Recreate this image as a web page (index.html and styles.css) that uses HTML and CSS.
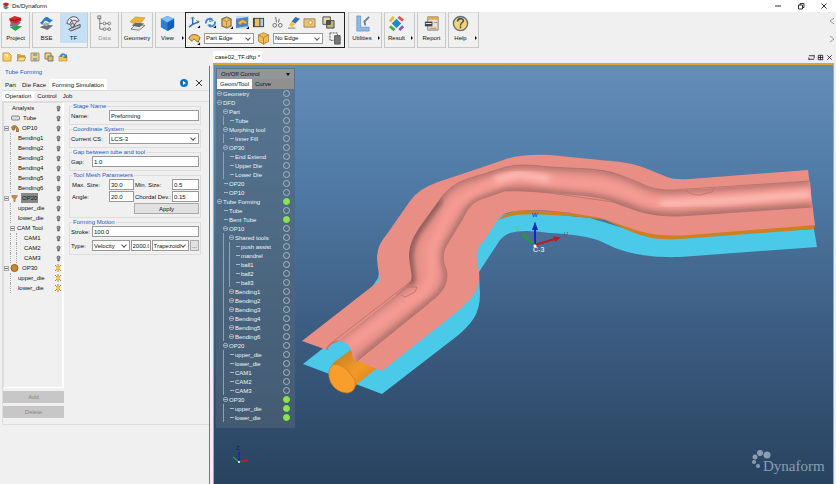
FILE: index.html
```html
<!DOCTYPE html>
<html lang="en">
<head>
<meta charset="utf-8">
<title>Ds/Dynaform</title>
<link rel="stylesheet" href="styles.css">
</head>
<body>
<svg class="defs" aria-hidden="true">
  <symbol id="layers" viewBox="0 0 18 18"><path d="M3 13l7-2 6 1-7 5z" fill="#2ca34a"/><path d="M4 8l6-2 5 2-6 5-6-1z" fill="#737b80"/><path d="M2 4l6-3 7 2v3l-5 3-6-1z" fill="#d52a2c"/><path d="M3 5l5 1 6-2" fill="none" stroke="#8f1418"/></symbol>
  <symbol id="cube" viewBox="0 0 18 18"><path d="M9 1l7 3v9l-7 4-7-4V4z" fill="#2f7fd0"/><path d="M9 1l7 3-7 4-7-4z" fill="#7cc0f4"/><path d="M9 8l7-4v9l-7 4z" fill="#1c5fae"/></symbol>
  <symbol id="box" viewBox="0 0 18 18"><path d="M9 1l7 3v9l-7 4-7-4V4z" fill="#f3bd55" stroke="#9b7428"/><path d="M2 4l7 4 7-4M9 8v9" fill="none" stroke="#9b7428"/></symbol>
</svg>

<header class="titlebar">
  <svg class="app-icon"><use href="#layers"/></svg>
  <h1>Ds/Dynaform</h1>
  <div class="window-buttons">
    <button aria-label="Minimize"><svg viewBox="0 0 8 8"><path d="M1 4h6"/></svg></button>
    <button aria-label="Restore"><svg viewBox="0 0 8 8"><path d="M1.500 3h4v4h-4zM3 3V1.500h4v4H5.500"/></svg></button>
    <button aria-label="Close window"><svg viewBox="0 0 8 8"><path d="M1.500 1.500l5 5m0-5l-5 5"/></svg></button>
  </div>
</header>

<nav class="toolbar" aria-label="Main">
  <div class="group"><button class="tool"><svg><use href="#layers"/></svg>Project</button></div>
  <div class="group">
    <button class="tool"><svg viewBox="0 0 18 18"><path d="M2 13l6-3 8 1-6 5z" fill="#6b7176"/><path d="M4 10l4-2 5 1-4 3z" fill="#a9b0b5"/><path d="M2 8c3-1 4-6 7-6s3 3 7 3l-3 3c-3 0-3-2-5-2s-2 4-4 4z" fill="#2c79d0"/></svg>BSE</button>
    <button class="tool active"><svg viewBox="0 0 18 18" fill="none" stroke="#4a4f55"><path d="M2 9C3 3 8 0 13 3l2 3-2 1C9 4 6 6 5 10z" fill="#eceff2"/><path d="M4 15l12-5v3L6 17z" fill="#c9ced3"/><path d="M6 4l2 4M9 12l4-6" stroke="#d3312f"/><circle cx="8" cy="11" r="2"/></svg>TF</button>
  </div>
  <div class="group"><button class="tool" disabled><svg viewBox="0 0 18 18" fill="none" stroke="#777"><path d="M4 3v12h4M4 9h3m3 0h3M11 15h2"/><rect x="2" y="1" width="3" height="3"/><circle cx="9" cy="9" r="1.500"/><circle cx="9" cy="15" r="1.500"/><circle cx="14" cy="9" r="1.500"/><circle cx="14" cy="15" r="1.500"/></svg>Data</button></div>
  <div class="group"><button class="tool wide"><svg viewBox="0 0 18 18"><path d="M2 15l5-5 10 1-6 5z" fill="#e6e8e8" stroke="#747a7c"/><path d="M3 11l4-3 9 1-5 4z" fill="#62696d"/><path d="M1 7l6-5 10 1-4 5-5-1-3 2z" fill="#eeb52e" stroke="#b3811a" stroke-width=".5"/></svg>Geometry</button></div>
  <div class="group view"><button class="tool arrow"><svg><use href="#cube"/></svg>View</button></div>

  <div class="quick" role="group" aria-label="Display">
    <div class="quick-row">
      <button aria-label="Orientation"><svg viewBox="0 0 14 14" fill="none"><path d="M5 9V2M5 9l7-3M5 9l-4 3" stroke="#2a6cb8" stroke-width="1.500"/><path d="M3 3l2-2 2 2M9 5l3 1-2 2" stroke="#3b9252"/><path d="M10 13h3v-3z" fill="#111"/></svg></button>
      <button aria-label="Rotate"><svg viewBox="0 0 14 14" fill="none" stroke="#3f8bd0" stroke-width="2"><path d="M2 8c0-5 4-6 7-4M12 6c0 5-4 6-7 4"/><path d="M7 2l3 3-4 1zM7 9l-3 1 3 2z" stroke-width="1"/><path d="M10 13h3v-3z" fill="#111" stroke="none"/></svg></button>
      <button aria-label="Box view"><svg viewBox="0 0 14 14"><path d="M7 1l5 2v8l-5 2-5-2V3z" fill="#8299ae" stroke="#7e642e"/><path d="M3 4l4-2 4 2v6l-4 2-4-2z" fill="#f3bd55"/><path d="M3 4l4 2 4-2M7 6v6" fill="none" stroke="#9b7428" stroke-width=".7"/><path d="M11 14h3v-3z" fill="#111"/></svg></button>
      <button class="active" aria-label="Shaded"><svg viewBox="0 0 14 14"><path d="M0 3l13-2v10L0 13z" fill="#4a87c7"/><path d="M2 8c2-5 7-5 10-1l-2 2c-2-2-4-2-5 1z" fill="#f3b23b" stroke="#8b6526" stroke-width=".5"/><path d="M11 14h3v-3z" fill="#111"/></svg></button>
      <button aria-label="Section"><svg viewBox="0 0 14 14"><path d="M1 2h12v10H1z" fill="#45433f"/><path d="M3 3h5v8H3z" fill="#f1bd59"/><path d="M9 3h3v8H9z" fill="#a9caee"/></svg></button>
      <button class="gap" aria-label="Hide"><svg viewBox="0 0 14 14" fill="none" stroke="#666"><path d="M5 1l1 6m3-4L8 7"/><circle cx="4" cy="10" r="2"/><circle cx="10" cy="10" r="2"/></svg></button>
      <button aria-label="Clear"><svg viewBox="0 0 14 14"><path d="M9 1l5 2-5 5-4-2z" fill="#336eb5"/><path d="M5 6l4 2-3 4-4-2z" fill="#f1c34b"/><path d="M1 13h8" stroke="#777"/></svg></button>
      <button aria-label="Capture"><svg viewBox="0 0 14 14"><path d="M1 3h12v9H1z" fill="#edc46e" stroke="#756443" stroke-width=".7"/><circle cx="8" cy="7" r="2" fill="#fff" stroke="#b59352"/></svg></button>
      <button class="gap" aria-label="Select overlap"><svg viewBox="0 0 14 14" stroke="#444"><path d="M1 1h8v8H1z" fill="#e6dfa5"/><path d="M5 5h8v8H5z" fill="#b8b777"/><path d="M5 5h4v4H5z" fill="#555"/></svg></button>
    </div>
    <div class="quick-row">
      <button aria-label="Part display"><svg viewBox="0 0 14 14"><path d="M1 7c1-5 8-6 12-1l-2 5-3-2c-1-2-3-1-4 1z" fill="#f2b94e" stroke="#80602b"/><path d="M10 14h3v-3z" fill="#111"/></svg></button>
      <span class="pick"><select aria-label="Part edge"><option>Part Edge</option></select></span>
      <button aria-label="Edge display"><svg><use href="#box"/></svg></button>
      <span class="pick"><select aria-label="Edge mode"><option>No Edge</option></select></span>
      <button class="gap" aria-label="Select inverse"><svg viewBox="0 0 14 14" fill="none" stroke="#555"><path d="M1 1h8v8H1z" stroke-dasharray="2 1"/><path d="M6 4h6v9H6z" fill="#777"/></svg></button>
    </div>
  </div>

  <div class="group"><button class="tool wide arrow"><svg viewBox="0 0 18 18"><path d="M3 1h4v12h9v4H3z" fill="#8fb9e3" stroke="#5a8cbf" stroke-width=".7"/><path d="M16 2l-5 5 1 4" fill="none" stroke="#68829c" stroke-width="2"/></svg>Utilities</button></div>
  <div class="group"><button class="tool arrow"><svg viewBox="0 0 18 18"><path d="M9 4l5 5-5 5-5-5z" fill="#218ac2"/><g fill="none" stroke-width="3"><path d="M2 7l4-5" stroke="#eeb83a"/><path d="M11 2l5 4" stroke="#df5550"/><path d="M16 12l-4 4" stroke="#8b57a4"/><path d="M2 12l5 4" stroke="#50a551"/></g></svg>Result</button></div>
  <div class="group"><button class="tool"><svg viewBox="0 0 18 18"><path d="M5 2h11v14H5z" fill="#e5e2d8" stroke="#807c74"/><path d="M5 2h11v3H5z" fill="#e4a94a"/><path d="M2 7h8v5H2z" fill="#444"/><path d="M3 9h6M7 14h7M12 8h3" stroke="#eee"/><path d="M7 14h7M12 8h3" stroke="#c4714c"/></svg>Report</button></div>
  <div class="group"><button class="tool arrow"><svg viewBox="0 0 18 18"><circle cx="9" cy="9" r="7.500" fill="#f3d477" stroke="#666f7b" stroke-width="1.500"/><path d="M6 7c0-4 6-4 6-1 0 2-3 2-3 5m0 1v2" fill="none" stroke="#455266" stroke-width="1.700"/></svg>Help</button></div>
  <div class="scroll-buttons">
    <button aria-label="Scroll left"><svg viewBox="0 0 8 8"><path d="M6 1L2 4l4 3"/></svg></button>
    <button aria-label="Scroll right"><svg viewBox="0 0 8 8"><path d="M2 1l4 3-4 3"/></svg></button>
  </div>
</nav>

<main class="workspace">
  <aside class="side">
    <div class="files">
      <button aria-label="New"><svg viewBox="0 0 10 10"><path d="M1 1h6l2 2v6H1z" fill="#f8cf6b" stroke="#c99a37"/><path d="M2 2h4v4z" fill="#fff1c2"/></svg></button>
      <button aria-label="Open"><svg viewBox="0 0 10 10"><path d="M1 9V2h3l1 1h4v6z" fill="#d8a23b"/><path d="M1 9l2-4h7L8 9z" fill="#f7d788" stroke="#9a7435" stroke-width=".6"/></svg></button>
      <button aria-label="Save"><svg viewBox="0 0 10 10"><path d="M1 1h8v8H1z" fill="#e9cf88" stroke="#a8976a"/><path d="M3 1h4v3H3zM3 6h4v3H3z" fill="#87a5bd"/></svg></button>
      <button aria-label="Save as"><svg viewBox="0 0 10 10"><path d="M1 1h6v6H1z" fill="#efcf7c" stroke="#8e7d56"/><path d="M4 4h5v5H4z" fill="#e3b853" stroke="#5e7e9a"/></svg></button>
      <button aria-label="Import"><svg viewBox="0 0 10 10"><path d="M1 4h8v5H1z" fill="#efc75c" stroke="#a68542" stroke-width=".6"/><path d="M2 5c0-5 5-4 6-2l1-1v4H5l2-2C5 2 4 3 4 5z" fill="#3b86c9"/></svg></button>
    </div>
    <section class="task">
      <div class="task-head">
        <h2>Tube Forming</h2>
        <div class="tabs" role="tablist">
          <button role="tab">Part</button><button role="tab">Die Face</button><button role="tab" aria-selected="true">Forming Simulation</button>
          <span class="task-actions">
            <button aria-label="Run"><svg viewBox="0 0 8 8"><circle cx="4" cy="4" r="4" fill="#1472bd"/><path d="M3 2l3 2-3 2z" fill="#fff"/></svg></button>
            <button aria-label="Close panel"><svg viewBox="0 0 8 8"><path d="M1 1l6 6m0-6L1 7" stroke="#333" fill="none"/></svg></button>
          </span>
        </div>
      </div>
      <div class="tabs sub" role="tablist">
        <button role="tab" aria-selected="true">Operation</button><button role="tab">Control</button><button role="tab">Job</button>
      </div>
      <div class="task-body">
        <div class="stages">
          <ul class="stage-tree" id="stages"></ul>
          <button class="plain" disabled>Add</button>
          <button class="plain" disabled>Delete</button>
        </div>
        <form class="form">
          <fieldset>
            <legend>Stage Name</legend>
            <div class="row"><label class="cap" for="name">Name:</label><input id="name" value="Preforming"></div>
          </fieldset>
          <fieldset>
            <legend>Coordinate System</legend>
            <div class="row"><label class="cap" for="cs">Current CS:</label><span class="pick"><select id="cs"><option>LCS-3</option></select></span></div>
          </fieldset>
          <fieldset>
            <legend>Gap between tube and tool</legend>
            <div class="row"><label class="short" for="gap">Gap:</label><input id="gap" value="1.0"></div>
          </fieldset>
          <fieldset class="mesh">
            <legend>Tool Mesh Parameters</legend>
            <div class="mesh-grid">
              <label for="max">Max. Size:</label><input id="max" value="30.0"><label for="min">Min. Size:</label><input id="min" value="0.5">
              <label for="angle">Angle:</label><input id="angle" value="20.0"><label for="dev">Chordal Dev.:</label><input id="dev" value="0.15">
              <button type="button" class="apply">Apply</button>
            </div>
          </fieldset>
          <fieldset class="motion">
            <legend>Forming Motion</legend>
            <div class="row"><label class="short" for="stroke">Stroke:</label><input id="stroke" value="100.0"></div>
            <div class="row type"><label class="short" for="type">Type:</label><span class="pick"><select id="type"><option>Velocity</option></select></span><input class="speed" aria-label="Speed" value="2000.0"><span class="pick"><select aria-label="Profile"><option>Trapezoidal</option></select></span><button type="button" class="more" aria-label="More">...</button></div>
          </fieldset>
        </form>
      </div>
    </section>
  </aside>

  <section class="document">
    <div class="doc-tabs">
      <button class="doc-tab">case02_TF.dftp *</button>
      <div class="doc-actions">
        <button aria-label="Swap"><svg viewBox="0 0 8 8"><path d="M1 2h6V1M7 6H1v1M7 2v3M1 6V4"/></svg></button>
        <button aria-label="Tile"><svg viewBox="0 0 8 8"><path d="M1.500 1.500h5v5h-5zM4 1.500v5M1.500 4h5"/></svg></button>
        <button aria-label="Close document"><svg viewBox="0 0 8 8"><path d="M1.500 1.500l5 5m0-5l-5 5"/></svg></button>
      </div>
    </div>
    <div class="viewport">
      <svg class="scene" viewBox="214 64 619 420" preserveAspectRatio="xMinYMin slice" role="img" aria-label="Formed tube between dies">
        <defs>
          <path id="tube" d="M328 348C330 341 337 340 341 338L395 295 410 281C414 276 409 266 409 253C410 242 414 235 419 227L440 198Q450 184 467 178L506 166Q520 162 550 166L590 168C605 169 611 170 620 174L640 182C650 187 658 190 673 189Q690 189 715 187L810 180 812 206 680 215C660 215 648 214 635 209L613 201C600 196 585 195 550 192Q520 189 506 190L480 199C470 203 467 210 463 218L449 241C443 250 443 257 445 264Q450 274 445 285Q441 294 429 302L357 360 353 358C353 348 347 339 338 340Q331 342 327 349Z"/>
          <clipPath id="tube-clip"><use href="#tube"/></clipPath>
          <filter id="soft" x="-10%" y="-10%" width="120%" height="120%"><feGaussianBlur stdDeviation="3"/></filter>
          <linearGradient id="pipe" x1="0" y1="0" x2="1" y2="1"><stop stop-color="#b87824"/><stop offset=".5" stop-color="#f39a28"/><stop offset="1" stop-color="#c57716"/></linearGradient>
          <marker id="red-head" markerWidth="7" markerHeight="6" refX="1" refY="3" orient="auto" markerUnits="userSpaceOnUse"><path d="M0 0l7 3-7 3z" fill="#b51c28"/></marker>
        </defs>
        <path class="cyan" d="M303 363L340 334 378 277 379 272 430 230 500 215Q520 207 550 213L590 217 640 232 680 236 814 228 817 246 680 256C650 257 632 253 615 247L600 240Q585 234 550 232Q523 228 510 232Q502 235 498 242L479 271 480 293Q480 307 474 317Q467 328 452 339L382 393 303 363Z"/>
        <path fill="#ce801f" d="M498 219Q506 211 521 209L550 210 590 214 640 229 680 233 815 223 814 228 680 238Q653 240 632 231L605 219Q580 215 550 214Q515 211 498 219Z"/>
        <path fill="url(#pipe)" d="M333 362L353 347 381 364 357 383Q352 392 341 391Q328 379 333 362Z"/>
        <path fill="#f99e2c" stroke="#c9791a" stroke-width=".7" d="M329 371Q330 363 337 363Q344 365 349 371L355 379Q357 391 347 392Q336 391 331 382Q328 376 329 371Z"/>
        <path class="salmon" d="M302 340L379 280C380 273 377 266 377 255Q378 243 387 233L410 200Q418 188 438 181L480 167 506 158Q521 153 550 154L600 159C626 161 636 163 650 169L667 176Q675 179 690 178L808 169 815 224 690 234Q660 236 639 230L612 221Q600 216 583 214Q555 209 530 209Q505 209 498 218L486 237Q475 249 477 258L479 271Q480 286 474 293Q467 303 453 314L382 370 353 358Q352 338 339 340Q330 342 327 349Z"/>
        <use href="#tube" fill="#ea938b"/>
        <g clip-path="url(#tube-clip)" fill="none" filter="url(#none)">
          <path d="M325 346L410 281C414 276 409 266 409 253C410 242 414 235 419 227L440 198Q450 184 467 178L506 166Q520 162 550 166L590 168Q606 169 620 174L640 182Q655 190 673 189L810 180" stroke="#a56a67" stroke-width="5" filter="url(#soft)"/>
          <path d="M412 283Q409 272 409 253Q410 240 419 227L440 198" stroke="#7c4f4e" stroke-width="6" filter="url(#soft)"/>
          <path d="M357 360L429 302Q441 294 445 285 450 274 445 264 443 250 449 241L463 218Q470 203 480 199L506 190Q520 189 550 192L590 196 613 201 635 209Q658 216 680 215L812 206" stroke="#9c6663" stroke-width="6" filter="url(#soft)"/>
          <path d="M348 345L424 290Q436 276 430 250L450 210Q464 188 518 175L555 180 595 183Q625 188 642 198 655 203 680 202L811 193" stroke="#f79d94" stroke-width="8" filter="url(#soft)"/>
          <path d="M495 179L518 173 550 178M660 203L720 200 811 193" stroke="#ffc9c1" stroke-width="5" filter="url(#soft)"/>
        </g>
        <path d="M330 343L410 281M440 198Q450 184 467 178L506 166Q520 162 550 166L590 168Q606 169 620 174L640 182Q655 190 673 189L810 180M357 360L429 302M506 190Q520 189 550 192L613 201 635 209Q658 216 680 215L812 206" fill="none" stroke="#a96e69" stroke-width=".7"/>
        <path d="M327 349Q327 344 338 340L332 342Q326 345 327 349M396 294L407 286 417 286 415 291 405 296 401 294M686 189Q690 194 700 194L712 191 714 187" fill="none" stroke="#bd706a" stroke-width=".8"/>
        <g stroke-width="2">
          <path d="M535 244L555 238" stroke="#b51c28" marker-end="url(#red-head)"/>
          <path d="M535 244V225" stroke="#1826bd"/><path d="M533 228L535 221 537 228Z" fill="#1826bd" stroke="none"/><path d="M532 229L535 221 538 229Z" fill="#1826bd"/>
          <path d="M535 244L525 236" stroke="#269b38"/><path d="M522 232L528 234 525 238Z" fill="#269b38"/>
        </g>
        <circle cx="535" cy="245" r="1.500" fill="#fff"/>
        <g class="axis-text"><text x="532" y="216" fill="#1725bd">W</text><text x="516" y="229" fill="#4fd33d">V</text><text x="564" y="235" fill="#c71c34">U</text><text class="origin" x="533" y="251" fill="#fff">C-3</text></g>
        <g stroke-width="1.500"><path d="M239 461V451" stroke="#1722c8"/><path d="M239 461L248 459" stroke="#c3202c"/><path d="M239 461L233 456" stroke="#22983c"/></g>
        <circle cx="239" cy="461" r="1" fill="#fff"/>
        <g class="axis-text"><text x="236" y="449" fill="#14206e">Z</text><text x="253" y="457" fill="#65303f">X</text></g>
        <g fill="#8b9db2"><circle cx="767" cy="454" r="3.500"/><circle cx="760" cy="452" r="3"/><circle cx="755" cy="456" r="2.500"/><circle cx="754" cy="461" r="2"/><circle cx="758" cy="465" r="2"/><text class="brand" x="763" y="470">Dynaform</text></g>
      </svg>
      <aside class="overlay">
        <button class="overlay-title">On/Off Control</button>
        <div class="overlay-tabs" role="tablist"><button role="tab" aria-selected="true">Geom/Tool</button><button role="tab">Curve</button></div>
        <ul id="parts"></ul>
      </aside>
    </div>
  </section>
</main>
<script src="trees.js"></script>
</body>
</html>
```
FILE: styles.css
```css
* { box-sizing: border-box; }
body {
  margin: 0;
  height: 100vh;
  display: flex;
  flex-direction: column;
  overflow: hidden;
  background: #f0f0f0;
  color: #111;
  font: 6px/8px "Liberation Sans", Arial, sans-serif;
}
button, input, select { font: inherit; color: inherit; margin: 0; padding: 0; border: 0; border-radius: 0; background: none; min-width: 0; }
h1, h2, ul { margin: 0; padding: 0; font: inherit; list-style: none; }
svg { display: block; }
.defs { position: absolute; width: 0; height: 0; }

.titlebar { display: flex; align-items: center; gap: 2px; height: 12px; padding-left: 2px; background: #fff; flex: none; }
.app-icon { width: 8px; height: 8px; }
.window-buttons { display: flex; gap: 15px; margin-left: auto; padding-right: 8px; }
.window-buttons svg, .scroll-buttons svg { width: 8px; height: 8px; fill: none; stroke: #333; }

.toolbar { display: flex; align-items: stretch; gap: 2px; height: 36px; padding-left: 1px; flex: none; }
.group { display: flex; border: 1px solid #c8c8c8; border-top-color: #ddd; }
.group.view { border-right: 0; margin-right: -2px; }
.tool { position: relative; width: 27px; display: flex; flex-direction: column; align-items: center; gap: 2px; padding-top: 2px; height: 30px; }
.tool svg { width: 17px; height: 17px; }
.tool.wide { width: 30px; }
.tool.active, .quick .active { background: #c5dff5; }
.tool:disabled { color: #999; }
.tool.arrow { padding-right: 6px; width: 29px; }
.tool.arrow.wide { width: 32px; }
.tool.arrow::after { content: ""; position: absolute; right: 1px; top: 23px; border: 2px solid transparent; border-left-color: #111; border-right: 0; }
.quick { display: flex; flex-direction: column; justify-content: space-around; width: 160px; padding: 1px 2px; border: 1px solid #222; margin-right: 1px; }
.quick-row { display: flex; align-items: center; gap: 3px; }
.quick-row button { flex: none; }
.quick-row svg { width: 13px; height: 13px; }
.quick-row .gap { margin-left: 3px; }
.quick .pick { height: 11px; flex: 1; }
.scroll-buttons { display: flex; flex-direction: column; justify-content: space-around; margin-left: auto; }
.scroll-buttons svg { stroke: #999; }

.pick { position: relative; display: flex; border: 1px solid #999; background: #fff; min-width: 0; }
.pick select { appearance: none; width: 100%; padding: 0 7px 0 1px; overflow: hidden; }
.pick::after { content: ""; position: absolute; right: 3px; top: 2px; width: 3px; height: 3px; border: solid #555; border-width: 0 1px 1px 0; transform: rotate(45deg); pointer-events: none; }

.workspace { display: flex; flex: 1; min-height: 0; }
.side { width: 213px; flex: none; display: flex; flex-direction: column; padding-right: 3px; }
.files { display: flex; align-items: center; gap: 4px; height: 18px; padding-left: 2px; }
.files svg { width: 10px; height: 10px; }
.task { flex: 1; margin-left: 2px; border-right: 1px solid #777; }
.task-head { padding-top: 1px; }
.task h2 { padding: 1px 3px; line-height: 9px; color: #2557c5; }
.tabs { display: flex; align-items: flex-end; height: 12px; line-height: 10px; }
.tabs [role=tab] { padding: 0 3px; }
.tabs [aria-selected=true] { background: #fff; height: 11px; }
.task-actions { display: flex; gap: 7px; margin: 0 6px 3px auto; }
.task-actions svg { width: 8px; height: 8px; }
.tabs.sub { height: 11px; border-top: 1px solid #ddd; }
.tabs.sub [aria-selected=true] { height: 10px; }
.task-body { display: flex; border: 1px solid #ddd; border-right: 0; padding-bottom: 6px; }
.stages { width: 61px; flex: none; display: flex; flex-direction: column; gap: 3px; }
.stage-tree { height: 286px; border: 1px solid #ddd; border-right: 2px solid #fff; border-bottom-color: #fff; }
.stage-tree li { display: flex; align-items: center; height: 10px; padding-right: 1px; }
.stage-tree .name { margin-left: 1px; padding: 0 1px; white-space: nowrap; }
.stage-tree .selected { background: #888; line-height: 10px; }
.stage-tree .lamp { width: 5px; height: 7px; margin-left: auto; }
.stage-tree .lamp.on { width: 6px; height: 8px; }
.stage-tree .indent { align-self: stretch; width: 6px; flex: none; }
.stage-tree .line { border-left: 1px dotted #aaa; }
.stage-tree .glyph { width: 9px; height: 8px; margin: 0 1px; flex: none; }
.fold { width: 5px; height: 5px; flex: none; border: 1px solid #aaa; position: relative; }
.fold::after { content: ""; position: absolute; left: 0; right: 0; top: 1px; height: 1px; background: #777; }
.plain { height: 12px; background: #c7c7c7; color: #888; }

.form { flex: 1; min-width: 0; padding: 0 8px 0 5px; }
fieldset { min-width: 0; margin: 0; padding: 0 1px 3px; border: 1px solid #ddd; }
legend { padding: 0 1px; margin-left: 1px; line-height: 8px; color: #2557c5; }
.row { display: flex; align-items: center; gap: 1px; }
.form input, .form .pick { height: 11px; border: 1px solid #999; background: #fff; }
.form input { width: 100%; padding: 0 1px; }
.row input, .row .pick { flex: 1; min-width: 0; }
.cap { width: 37px; flex: none; }
.short { width: 20px; flex: none; }
.mesh-grid { display: grid; grid-template-columns: 38px 25px 38px 1fr; row-gap: 1px; align-items: center; }
.mesh-grid label { white-space: nowrap; padding-left: 1px; }
.mesh-grid .apply { grid-column: 3 / 5; }
.apply, .more { height: 11px; border: 1px solid #aaa; background: #e1e1e1; }
.row.type { margin-top: 3px; }
.row.type .speed { flex: 0 0 20px; }
.more { width: 9px; }

.document { flex: 1; min-width: 0; display: flex; flex-direction: column; padding-right: 2px; }
.doc-tabs { display: flex; justify-content: space-between; height: 15px; padding-top: 3px; }
.doc-tab { background: #fff; padding: 0 2px; height: 11px; }
.doc-actions { display: flex; gap: 2px; padding-right: 1px; }
.doc-actions svg { width: 7px; height: 7px; fill: none; stroke: #222; }
.viewport { position: relative; flex: 1; min-height: 0; border: 1px solid #dca42d; border-top-width: 2px; border-bottom: 0; background: linear-gradient(#658db8, #527da9 25%, #3b5b80 65%, #28435f); }
.scene { position: absolute; inset: 0; width: 100%; height: 100%; }
.cyan { fill: #4ac9e8; }
.salmon { fill: #e88e85; }
.axis-text { font: 6px "Liberation Sans", sans-serif; }
.origin { font-size: 7px; }
.brand { font: 15px "Liberation Serif", serif; }

.overlay { position: absolute; left: 2px; top: 3px; width: 79px; padding: 1px 1px 6px; background: #52657699; color: #eef3f8; }
.overlay-title { position: relative; display: block; width: 100%; height: 10px; padding-left: 4px; text-align: left; background: #939699; color: #111; }
.overlay-title::after { content: ""; position: absolute; right: 4px; top: 4px; border: 2px solid transparent; border-top: 3px solid #111; border-bottom: 0; }
.overlay-tabs { display: flex; background: #909090; color: #111; height: 10px; }
.overlay-tabs button { padding: 0 3px; }
.overlay-tabs [aria-selected=true] { background: #fff; }
.overlay li { display: flex; align-items: center; height: 9px; padding-right: 4px; }
.overlay .indent { width: 6px; align-self: stretch; flex: none; }
.overlay .line { border-left: 1px solid #8fa2b3; }
.overlay .dash { width: 4px; height: 1px; margin: 0 1px; background: #a9b8c5; }
.overlay .fold { margin-right: 1px; border-color: #9aabba; border-radius: 2px; }
.overlay .fold::after { background: #9aabba; }
.overlay .dot { width: 7px; height: 7px; margin-left: auto; border: 1px solid #aab7c3; border-radius: 50%; }
.overlay .dot.on { background: #8be34d; border-color: #8be34d; }
```
FILE: trees.js
```js
// Each entry: nesting depth, label, flags ("f" foldable, "o" on, "s" selected), glyph.
const stages = [
  [0, 'Analysis'], [1, 'Tube', '', 'tube'], [0, 'OP10', 'f', 'bend'],
  [2, 'Bending1'], [2, 'Bending2'], [2, 'Bending3'], [2, 'Bending4'], [2, 'Bending5'], [2, 'Bending6'],
  [0, 'OP20', 'fs', 'press'], [2, 'upper_die'], [2, 'lower_die'], [1, 'CAM Tool', 'f'],
  [3, 'CAM1'], [3, 'CAM2'], [3, 'CAM3'], [0, 'OP30', 'fo', 'disc'], [2, 'upper_die', 'o'], [2, 'lower_die', 'o']
];
const parts = [
  [0, 'Geometry', 'f'], [0, 'DFD', 'f'], [1, 'Part', 'f'], [2, 'Tube'], [1, 'Morphing tool', 'f'], [2, 'Inner Fill'],
  [1, 'OP30', 'f'], [2, 'End Extend'], [2, 'Upper Die'], [2, 'Lower Die'], [1, 'OP20'], [1, 'OP10'],
  [0, 'Tube Forming', 'fo'], [1, 'Tube'], [1, 'Bent Tube', 'o'], [1, 'OP10', 'f'], [2, 'Shared tools', 'f'],
  [3, 'push assist'], [3, 'mandrel'], [3, 'ball1'], [3, 'ball2'], [3, 'ball3'],
  [2, 'Bending1', 'f'], [2, 'Bending2', 'f'], [2, 'Bending3', 'f'], [2, 'Bending4', 'f'], [2, 'Bending5', 'f'], [2, 'Bending6', 'f'],
  [1, 'OP20', 'f'], [2, 'upper_die'], [2, 'lower_die'], [2, 'CAM1'], [2, 'CAM2'], [2, 'CAM3'],
  [1, 'OP30', 'fo'], [2, 'upper_die', 'o'], [2, 'lower_die', 'o']
];
const glyphs = {
  tube: '<rect x="0" y="2" width="8" height="4" rx="1" fill="#ddd" stroke="#888"/>',
  bend: '<path d="M1 3Q5-1 8 5v3H6V5L4 3v3H2z" fill="#c9873c" stroke="#765126" stroke-width=".6"/>',
  press: '<path d="M1 1h6v2L5 5v3H3V5L1 3z" fill="#ba8c55"/>',
  disc: '<circle cx="4" cy="4" r="3.500" fill="#c98932" stroke="#94621e"/>'
};
const lampOff = '<path d="M1 3a2 2 0 1 1 4 0L4 5v2H2V5z" fill="#777" stroke="#444" stroke-width=".6"/><path d="M2 2h1v2H2z" fill="#ddd"/>';
const lampOn = '<path d="M0 1l6 6M6 1L0 7M3 0v8" stroke="#8d6420" stroke-width=".8"/><circle cx="3" cy="4" r="2" fill="#ffc637"/>';
const indent = (n) => Array.from({ length: n }, (_, i) => `<span class="indent${i ? ' line' : ''}"></span>`).join('');

document.getElementById('stages').innerHTML = stages.map(([depth, name, flags = '', glyph]) =>
  `<li>${indent(depth)}${flags.includes('f') ? '<span class="fold"></span>' : depth ? '' : '<span class="indent"></span>'}` +
  `${glyph ? `<svg class="glyph" viewBox="0 0 8 8">${glyphs[glyph]}</svg>` : ''}` +
  `<span class="name${flags.includes('s') ? ' selected' : ''}">${name}</span>` +
  `<svg class="lamp${flags.includes('o') ? ' on' : ''}" viewBox="0 0 6 8">${flags.includes('o') ? lampOn : lampOff}</svg></li>`).join('');

document.getElementById('parts').innerHTML = parts.map(([depth, name, flags = '']) =>
  `<li>${indent(depth)}<span class="${flags.includes('f') ? 'fold' : 'dash'}"></span><span>${name}</span>` +
  `<span class="dot${flags.includes('o') ? ' on' : ''}"></span></li>`).join('');
```
